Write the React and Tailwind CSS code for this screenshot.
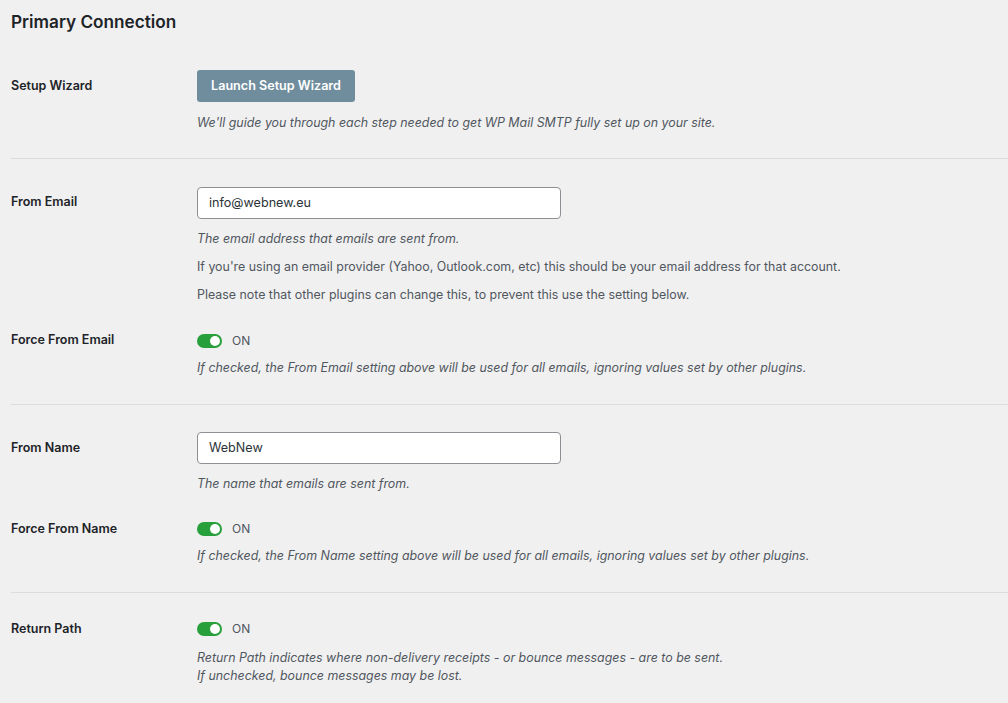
import React from "react";

const font = { fontFamily: "Inter, 'Noto Sans', sans-serif" };

function Label({ children, className = "" }) {
  return (
    <div className={"w-[186px] shrink-0 text-[12.5px] font-semibold text-[#1d2327] " + className}>
      {children}
    </div>
  );
}

function Desc({ children, className = "" }) {
  return <p className={"text-[12.4px] italic leading-[18px] text-[#50575e] " + className}>{children}</p>;
}

function Plain({ children, className = "" }) {
  return <p className={"text-[12.4px] leading-[18px] text-[#50575e] " + className}>{children}</p>;
}

function Toggle() {
  return (
    <div className="flex h-[20px] items-center gap-[10px]">
      <span className="flex h-[14px] w-[25px] items-center justify-end rounded-full bg-[#27a03c] pr-[2px]">
        <span className="h-[10px] w-[10px] rounded-full bg-white" />
      </span>
      <span className="text-[12px] text-[#50575e]">ON</span>
    </div>
  );
}

function Input({ value }) {
  return (
    <div className="flex h-[32px] w-[364px] items-center rounded-[4px] border border-[#8c8f94] bg-white px-[11px] text-[12.6px] text-[#2c3338]">
      {value}
    </div>
  );
}

export default function App() {
  return (
    <div className="min-h-screen bg-[#f0f0f1] pl-[11px]" style={font}>
      <h2 className="pt-[11px] text-[17.2px] font-semibold leading-[22px] text-[#1d2327]">Primary Connection</h2>

      {/* Setup wizard */}
      <div className="mt-[37px] border-b border-[#dcdcde] pb-[26px]">
        <div className="flex">
          <Label className="leading-[32px]">Setup Wizard</Label>
          <div>
            <button className="h-[32px] w-[158px] rounded-[3px] bg-[#6f8d9d] text-[12.6px] font-semibold text-white">
              Launch Setup Wizard
            </button>
            <Desc className="mt-[12px]">We'll guide you through each step needed to get WP Mail SMTP fully set up on your site.</Desc>
          </div>
        </div>
      </div>

      {/* From email */}
      <div className="border-b border-[#dcdcde] pb-[27px] pt-[28px]">
        <div className="flex">
          <Label className="leading-[30px]">From Email</Label>
          <div>
            <Input value="info@webnew.eu" />
            <Desc className="mt-[11px]">The email address that emails are sent from.</Desc>
            <Plain className="mt-[10px]">If you're using an email provider (Yahoo, Outlook.com, etc) this should be your email address for that account.</Plain>
            <Plain className="mt-[10px]">Please note that other plugins can change this, to prevent this use the setting below.</Plain>
          </div>
        </div>
        <div className="mt-[27px] flex">
          <Label className="leading-[18px]">Force From Email</Label>
          <div>
            <Toggle />
            <Desc className="mt-[8px]">If checked, the From Email setting above will be used for all emails, ignoring values set by other plugins.</Desc>
          </div>
        </div>
      </div>

      {/* From name */}
      <div className="border-b border-[#dcdcde] pb-[27px] pt-[27px]">
        <div className="flex">
          <Label className="leading-[32px]">From Name</Label>
          <div>
            <Input value="WebNew" />
            <Desc className="mt-[11px]">The name that emails are sent from.</Desc>
          </div>
        </div>
        <div className="mt-[26px] flex">
          <Label className="leading-[20px]">Force From Name</Label>
          <div>
            <Toggle />
            <Desc className="mt-[8px]">If checked, the From Name setting above will be used for all emails, ignoring values set by other plugins.</Desc>
          </div>
        </div>
      </div>

      {/* Return path */}
      <div className="pt-[26px] pb-[20px]">
        <div className="flex">
          <Label className="leading-[20px]">Return Path</Label>
          <div>
            <Toggle />
            <Desc className="mt-[10px]">
              Return Path indicates where non-delivery receipts - or bounce messages - are to be sent.
              <br />
              If unchecked, bounce messages may be lost.
            </Desc>
          </div>
        </div>
      </div>
    </div>
  );
}
